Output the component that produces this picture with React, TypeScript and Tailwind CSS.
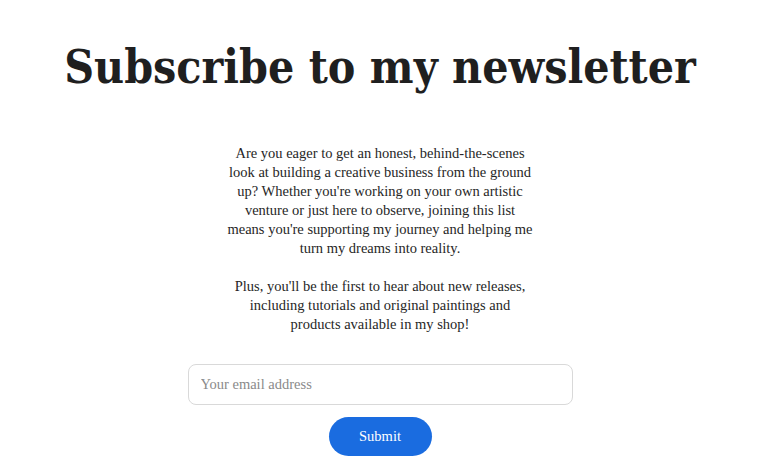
export default function App() {
  return (
    <div className="min-h-screen bg-white pr-2">
      <div className="flex flex-col items-center pt-[35px]">
        <h1
          className="text-[46px] leading-[64px] font-bold text-[#1f1f1f] [font-stretch:condensed]"
          style={{ fontFamily: '"DejaVu Serif Condensed", "DejaVu Serif", serif' }}
        >
          Subscribe to my newsletter
        </h1>
        <div
          className="mt-[45px] w-[310px] text-center text-[14.5px] leading-[19px] text-[#262626]"
          style={{ fontFamily: '"Liberation Serif", serif' }}
        >
          <p>
            Are you eager to get an honest, behind-the-scenes look at building a creative business from the ground up? Whether
            you're working on your own artistic venture or just here to observe, joining this list means you're supporting my
            journey and helping me turn my dreams into reality.
          </p>
          <p className="mt-[19px]">
            Plus, you'll be the first to hear about new releases, including tutorials and original paintings and products
            available in my shop!
          </p>
        </div>
        <form className="mt-[30px] flex flex-col items-center" onSubmit={e => e.preventDefault()}>
          <input
            type="email"
            placeholder="Your email address"
            style={{ fontFamily: '"Liberation Serif", serif' }}
            className="w-[385px] h-[41px] rounded-lg border border-[#d9d9d9] px-3 text-[14.5px] text-[#333] placeholder:text-[#8a8a8a] outline-none"
          />
          <button
            type="submit"
            style={{ fontFamily: '"Liberation Serif", serif' }}
            className="mt-3 w-[103px] h-[39px] rounded-full bg-[#1a6ce0] text-white text-[14.5px]"
          >
            Submit
          </button>
        </form>
      </div>
    </div>
  );
}
